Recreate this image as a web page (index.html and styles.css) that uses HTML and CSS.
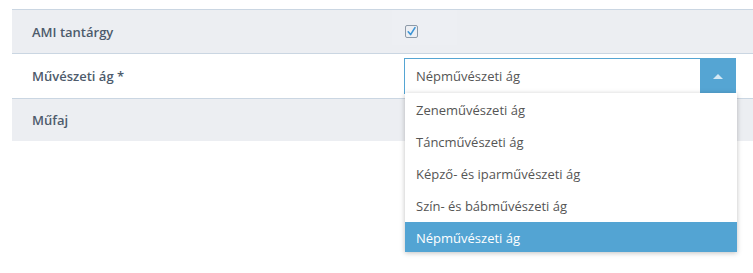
FILE: index.html
```html
<!DOCTYPE html>
<html lang="hu">

<head>
    <meta charset="UTF-8">
    <meta name="viewport" content="width=device-width, initial-scale=1.0">
    <title>AMI</title>
    <link rel="stylesheet" href="styles.css">
</head>

<body>
    <div class="form">
        <div class="row gray">
            <div class="label">AMI tantárgy</div>
            <div class="value">
                <span class="check-wrap">
                    <span class="checkbox">
                        <svg width="11" height="11" viewBox="0 0 11 11">
                            <path d="M2.2 5.8 L4.6 8.6 L9 1.6" fill="none" stroke="#3d95d6" stroke-width="1.6" stroke-linecap="round" stroke-linejoin="round"/>
                        </svg>
                    </span>
                </span>
            </div>
        </div>

        <div class="row white">
            <div class="label">Művészeti ág *</div>
            <div class="value">
                <div class="select">
                    <div class="select-text">Népművészeti ág</div>
                    <div class="select-btn"><span class="arrow"></span></div>

                    <ul class="dropdown">
                        <li>Zeneművészeti ág</li>
                        <li>Táncművészeti ág</li>
                        <li>Képző- és iparművészeti ág</li>
                        <li>Szín- és bábművészeti ág</li>
                        <li class="selected">Népművészeti ág</li>
                    </ul>
                </div>
            </div>
        </div>

        <div class="row gray last">
            <div class="label">Műfaj</div>
            <div class="value"></div>
        </div>
    </div>
</body>

</html>
```

FILE: styles.css
```css
html,
body {
    min-height: 273px;
}

body {
    margin: 0;
    font-family: "Open Sans", "Liberation Sans", sans-serif;
    font-size: 13px;
    background: #ffffff;
}

.form {
    margin: 9px 0 0 12px;
    border-top: 1px solid #cad6e2;
}

.row {
    display: grid;
    grid-template-columns: 380px 1fr;
    border-bottom: 1px solid #cad6e2;
}

.row.last {
    border-bottom: none;
}

.gray {
    background: #eceef2;
    height: 43px;
}

.white {
    background: #ffffff;
    height: 44px;
}

.last {
    height: 42px;
}

.label {
    padding-left: 20px;
    font-weight: 600;
    color: #4e5b6c;
    display: flex;
    align-items: center;
}

.value {
    display: flex;
    align-items: center;
    padding-right: 17px;
}

.check-wrap {
    width: 65px;
    height: 35px;
    margin-top: -8px;
    background: #edeff3;
    display: flex;
    align-items: center;
    padding-left: 13px;
    box-sizing: border-box;
}

.checkbox {
    width: 11px;
    height: 11px;
    border: 1px solid #8d9aa8;
    border-radius: 2px;
    display: flex;
    margin-top: 8px;
}

.select {
    position: relative;
    display: flex;
    width: 332px;
    height: 36px;
    margin-left: 12px;
    border: 1px solid #55a5d3;
    border-right: none;
    box-sizing: border-box;
}

.select-text {
    flex: 1;
    padding-left: 11px;
    display: flex;
    align-items: center;
    color: #555;
}

.select-btn {
    width: 36px;
    margin-top: -1px;
    margin-bottom: -1px;
    background: #55a5d3;
    display: flex;
    align-items: center;
    justify-content: center;
}

.arrow {
    width: 0;
    height: 0;
    border-left: 5px solid transparent;
    border-right: 5px solid transparent;
    border-bottom: 5px solid rgba(255, 255, 255, 0.75);
}

.dropdown {
    position: absolute;
    top: 34px;
    left: 0;
    right: -1px;
    height: 159px;
    margin: 0;
    padding: 1px 0 0;
    list-style: none;
    background: #fff;
    overflow: hidden;
    box-shadow: 0 1px 5px rgba(0, 0, 0, 0.25);
    z-index: 5;
    box-sizing: border-box;
}

.dropdown li {
    height: 32px;
    line-height: 32px;
    padding-left: 11px;
    color: #555;
}

.dropdown li.selected {
    background: #53a4d3;
    color: #fff;
}
```
